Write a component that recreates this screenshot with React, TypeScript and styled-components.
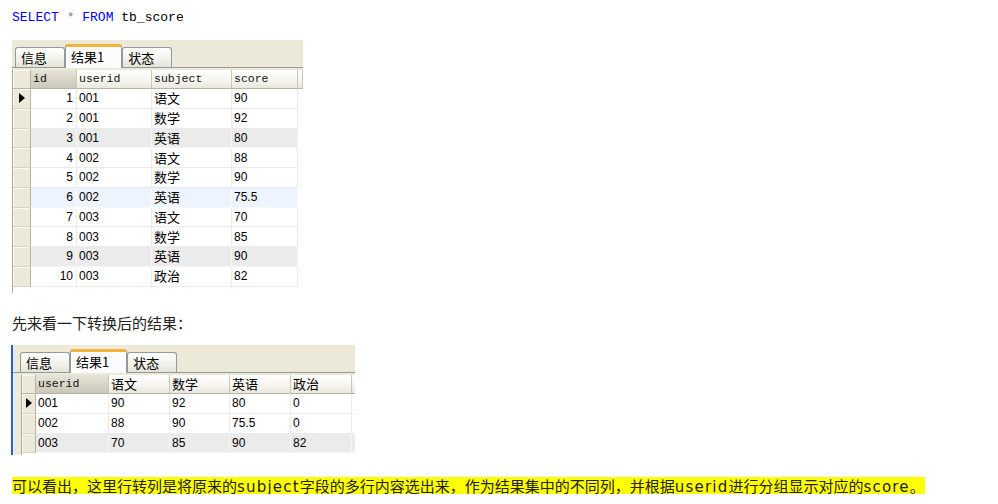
import React from 'react';
import styled, { createGlobalStyle, css } from 'styled-components';

const Global = createGlobalStyle`
  html, body { margin: 0; padding: 0; background: #fff; }
  body { font-family: "Noto Sans CJK SC", "Liberation Sans", sans-serif; color: #222; }
`;

const Page = styled.div`
  padding: 9px 0 0 12px;
  display: flex;
  flex-direction: column;
  align-items: flex-start;
`;

const Sql = styled.div`
  font-family: "Liberation Mono", monospace;
  font-size: 13px;
  line-height: 18px;
  color: #000;
  white-space: pre;
`;
const Kw = styled.span`color: #0000ff;`;
const Op = styled.span`color: #808080;`;

const Panel = styled.div<{ $w: number; $h: number; $mt: number; $accent?: boolean }>`
  width: ${p => p.$w}px;
  height: ${p => p.$h}px;
  margin-top: ${p => p.$mt}px;
  background: #ece9d8;
  overflow: hidden;
  display: flex;
  flex-direction: column;
  ${p => p.$accent && css`
    border-left: 2px solid #2360e2;
    margin-left: -1px;
    box-shadow: inset 1px 0 0 #f4f3ec;
  `}
`;

const TabStrip = styled.div<{ $pad: number }>`
  box-sizing: border-box;
  height: 28px;
  flex: 0 0 28px;
  padding-left: ${p => p.$pad}px;
  border-bottom: 1px solid #919b9c;
  background: #ece9d8;
  display: flex;
  align-items: flex-end;
`;

const Tab = styled.div<{ $active?: boolean }>`
  box-sizing: border-box;
  height: 20px;
  padding: 0 17px 0 5px;
  border: 1px solid #919b9c;
  border-bottom: none;
  border-radius: 3px 3px 0 0;
  background: linear-gradient(#ffffff, #f1f0ea 60%, #e4e2d8);
  font-size: 13px;
  line-height: 19px;
  color: #000;
  white-space: nowrap;
  ${p => p.$active && css`
    position: relative;
    height: 24px;
    margin-bottom: -1px;
    padding-top: 1px;
    border-top: 3px solid #f3b23a;
    background: #fcfcfe;
    line-height: 18px;
  `}
`;

const Grid = styled.div<{ $inset: number }>`
  flex: 1;
  margin: 2px 0 0 ${p => p.$inset}px;
  border-left: 1px solid #aca899;
  background: #fff;
  display: flex;
  flex-direction: column;
`;

const HeaderRow = styled.div`
  display: flex;
  height: 19px;
  flex: 0 0 19px;
`;

const Row = styled.div<{ $tone: 'white' | 'gray' | 'blue' }>`
  display: flex;
  height: 19.75px;
  flex: 0 0 19.75px;
  --bg: ${p => (p.$tone === 'gray' ? '#ebebeb' : p.$tone === 'blue' ? '#edf4fd' : '#ffffff')};
  --line: ${p => (p.$tone === 'gray' ? '#f6f6f6' : p.$tone === 'blue' ? '#f7faff' : '#ebebeb')};
`;

const Indicator = styled.div<{ $w: number; $head?: boolean }>`
  box-sizing: border-box;
  flex: 0 0 ${p => p.$w}px;
  background: #ece9d8;
  border-right: 1px solid #b8b4a5;
  border-bottom: 1px solid ${p => (p.$head ? '#b8b4a5' : '#d9d5c6')};
  box-shadow: inset 1px 1px 0 #fbfaf5;
  display: flex;
  align-items: center;
  justify-content: center;
`;

const Arrow = styled.span`
  width: 0;
  height: 0;
  border-left: 6px solid #000;
  border-top: 5.5px solid transparent;
  border-bottom: 5.5px solid transparent;
  margin-left: 1px;
`;

const HeadCell = styled.div<{ $w?: number; $sorted?: boolean }>`
  box-sizing: border-box;
  ${p => (p.$w ? css`flex: 0 0 ${p.$w}px;` : css`flex: 1;`)}
  padding-left: 2px;
  background: ${p => (p.$sorted
    ? 'linear-gradient(#e6e3d9, #d6d2c5 60%, #cbc7b9)'
    : 'linear-gradient(#ffffff, #f5f4ef 60%, #e9e7df)')};
  border-right: 1px solid #cbc7b8;
  border-bottom: 1px solid #b8b4a5;
  display: flex;
  align-items: center;
  overflow: hidden;
  white-space: nowrap;
  line-height: 14px;
`;

const Cell = styled.div<{ $w: number; $right?: boolean }>`
  box-sizing: border-box;
  flex: 0 0 ${p => p.$w}px;
  padding: 0 ${p => (p.$right ? 3 : 0)}px 0 ${p => (p.$right ? 0 : 2)}px;
  background: var(--bg);
  border-right: 1px solid var(--line);
  border-bottom: 1px solid var(--line);
  display: flex;
  align-items: center;
  justify-content: ${p => (p.$right ? 'flex-end' : 'flex-start')};
  overflow: hidden;
  white-space: nowrap;
  font-family: "Liberation Sans", "Noto Sans CJK SC", sans-serif;
  font-size: 12px;
  line-height: 14px;
  color: #000;
`;

const FillCell = styled.div`
  flex: 1;
  background: #fff;
`;

const HeadLatin = styled.span`
  display: block;
  font-family: "Liberation Mono", monospace;
  font-size: 11.5px;
  line-height: 14px;
  color: #111;
`;
const Cjk = styled.span`
  display: block;
  font-family: "Noto Sans CJK SC", sans-serif;
  font-size: 13px;
  line-height: 14px;
  color: #000;
`;

const Para = styled.p`
  margin: 20px 0 0;
  font-size: 15px;
  line-height: 20px;
  color: #222;
`;

const Highlight = styled.div`
  margin-top: 22px;
  display: inline-block;
  height: 17px;
  line-height: 17px;
  background: #ffff00;
  font-size: 15px;
  color: #222;
  white-space: nowrap;
`;
const Latin = styled.span`
  font-family: "DejaVu Sans", sans-serif;
  letter-spacing: 1.2px;
`;

const hasCjk = (s: string) => /[\u4e00-\u9fff]/.test(s);

function HeadText({ text }: { text: string }) {
  return hasCjk(text) ? <Cjk>{text}</Cjk> : <HeadLatin>{text}</HeadLatin>;
}
function CellText({ text }: { text: string }) {
  return hasCjk(text) ? <Cjk>{text}</Cjk> : <>{text}</>;
}

type Col = { label: string; w: number; right?: boolean };
type Tone = 'white' | 'gray' | 'blue';

function ResultPanel(props: {
  w: number; h: number; mt: number; accent?: boolean;
  tabPad: number; inset: number; indW: number;
  cols: Col[]; rows: string[][]; tones: Tone[]; fillHead?: boolean;
}) {
  const { cols, rows, tones } = props;
  return (
    <Panel $w={props.w} $h={props.h} $mt={props.mt} $accent={props.accent}>
      <TabStrip $pad={props.tabPad}>
        <Tab>信息</Tab>
        <Tab $active>结果1</Tab>
        <Tab>状态</Tab>
      </TabStrip>
      <Grid $inset={props.inset}>
        <HeaderRow>
          <Indicator $w={props.indW} $head />
          {cols.map((c, i) => (
            <HeadCell key={i} $w={c.w} $sorted={i === 0}>
              <HeadText text={c.label} />
            </HeadCell>
          ))}
          {props.fillHead && <HeadCell />}
        </HeaderRow>
        {rows.map((r, ri) => (
          <Row key={ri} $tone={tones[ri]}>
            <Indicator $w={props.indW}>{ri === 0 && <Arrow />}</Indicator>
            {cols.map((c, ci) => (
              <Cell key={ci} $w={c.w} $right={c.right}>
                <CellText text={r[ci]} />
              </Cell>
            ))}
            <FillCell />
          </Row>
        ))}
      </Grid>
    </Panel>
  );
}

const cols1: Col[] = [
  { label: 'id', w: 46, right: true },
  { label: 'userid', w: 75 },
  { label: 'subject', w: 80 },
  { label: 'score', w: 66 },
];
const rows1 = [
  ['1', '001', '语文', '90'],
  ['2', '001', '数学', '92'],
  ['3', '001', '英语', '80'],
  ['4', '002', '语文', '88'],
  ['5', '002', '数学', '90'],
  ['6', '002', '英语', '75.5'],
  ['7', '003', '语文', '70'],
  ['8', '003', '数学', '85'],
  ['9', '003', '英语', '90'],
  ['10', '003', '政治', '82'],
];
const tones1: Tone[] = ['white', 'white', 'gray', 'white', 'white', 'blue', 'white', 'white', 'gray', 'white'];

const cols2: Col[] = [
  { label: 'userid', w: 73 },
  { label: '语文', w: 61 },
  { label: '数学', w: 60 },
  { label: '英语', w: 61 },
  { label: '政治', w: 61 },
  { label: '', w: 60 },
];
const rows2 = [
  ['001', '90', '92', '80', '0', ''],
  ['002', '88', '90', '75.5', '0', ''],
  ['003', '70', '85', '90', '82', ''],
];
const tones2: Tone[] = ['white', 'white', 'gray'];

export default function App() {
  return (
    <>
      <Global />
      <Page>
        <Sql>
          <Kw>SELECT</Kw> <Op>*</Op> <Kw>FROM</Kw> tb_score
        </Sql>
        <ResultPanel
          w={291} h={253} mt={13} tabPad={3} inset={0} indW={18}
          cols={cols1} rows={rows1} tones={tones1} fillHead
        />
        <Para>先来看一下转换后的结果：</Para>
        <ResultPanel
          w={342} h={110} mt={12} accent tabPad={7} inset={8} indW={14}
          cols={cols2} rows={rows2} tones={tones2}
        />
        <Highlight>
          可以看出，这里行转列是将原来的<Latin>subject</Latin>字段的多行内容选出来，作为结果集中的不同列，并根据<Latin>userid</Latin>进行分组显示对应的<Latin>score</Latin>。
        </Highlight>
      </Page>
    </>
  );
}
